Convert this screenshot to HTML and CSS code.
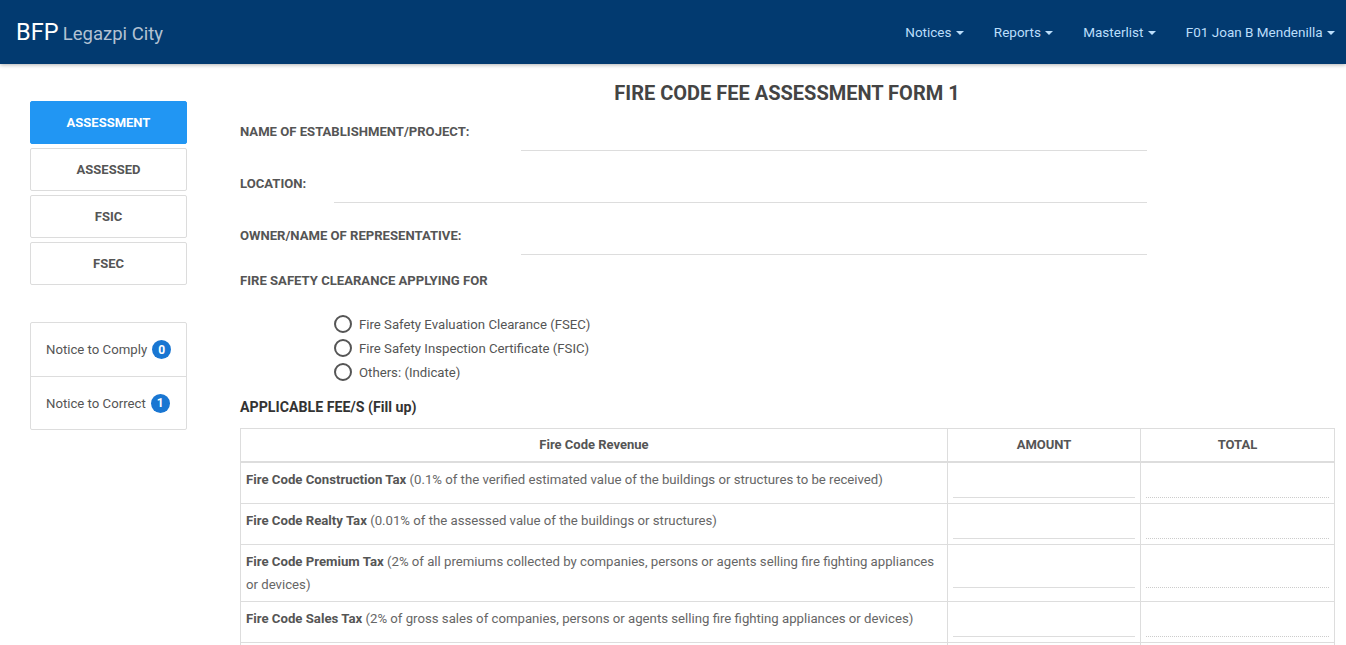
FILE: index.html
```html
<!DOCTYPE html>
<html>
<head>
<meta charset="utf-8">
<title>BFP Legazpi City</title>
<link rel="stylesheet" href="styles.css">
</head>
<body>
<nav class="navbar">
  <div class="brand"><span class="brand-main">BFP</span> <span class="brand-sub">Legazpi City</span></div>
  <ul class="nav">
    <li>Notices <span class="caret"></span></li>
    <li>Reports <span class="caret"></span></li>
    <li>Masterlist <span class="caret"></span></li>
    <li>F01 Joan B Mendenilla <span class="caret"></span></li>
  </ul>
</nav>
<div class="page">
  <aside class="sidebar">
    <div class="menu">
      <div class="menu-btn active">ASSESSMENT</div>
      <div class="menu-btn">ASSESSED</div>
      <div class="menu-btn">FSIC</div>
      <div class="menu-btn">FSEC</div>
    </div>
    <ul class="notices">
      <li>Notice to Comply <span class="badge">0</span></li>
      <li>Notice to Correct <span class="badge">1</span></li>
    </ul>
  </aside>
  <main class="content">
    <h1 class="title">FIRE CODE FEE ASSESSMENT FORM 1</h1>
    <div class="form-row">
      <label class="field-label">NAME OF ESTABLISHMENT/PROJECT:</label>
      <div class="line-input wide"></div>
    </div>
    <div class="form-row">
      <label class="field-label">LOCATION:</label>
      <div class="line-input loc"></div>
    </div>
    <div class="form-row">
      <label class="field-label">OWNER/NAME OF REPRESENTATIVE:</label>
      <div class="line-input wide"></div>
    </div>
    <div class="field-label section">FIRE SAFETY CLEARANCE APPLYING FOR</div>
    <div class="radios">
      <div class="radio"><span class="circle"></span>Fire Safety Evaluation Clearance (FSEC)</div>
      <div class="radio"><span class="circle"></span>Fire Safety Inspection Certificate (FSIC)</div>
      <div class="radio"><span class="circle"></span>Others: (Indicate)</div>
    </div>
    <h2 class="fees">APPLICABLE FEE/S (Fill up)</h2>
    <table class="fee-table">
      <colgroup><col class="c1"><col class="c2"><col class="c3"></colgroup>
      <thead>
        <tr><th>Fire Code Revenue</th><th>AMOUNT</th><th>TOTAL</th></tr>
      </thead>
      <tbody>
        <tr>
          <td class="desc"><b>Fire Code Construction Tax</b> (0.1% of the verified estimated value of the buildings or structures to be received)</td>
          <td class="inp"><div class="amount"></div></td>
          <td class="inp"><div class="total"></div></td>
        </tr>
        <tr>
          <td class="desc"><b>Fire Code Realty Tax</b> (0.01% of the assessed value of the buildings or structures)</td>
          <td class="inp"><div class="amount"></div></td>
          <td class="inp"><div class="total"></div></td>
        </tr>
        <tr>
          <td class="desc"><b>Fire Code Premium Tax</b> (2% of all premiums collected by companies, persons or agents selling fire fighting appliances or devices)</td>
          <td class="inp"><div class="amount"></div></td>
          <td class="inp"><div class="total"></div></td>
        </tr>
        <tr>
          <td class="desc"><b>Fire Code Sales Tax</b> (2% of gross sales of companies, persons or agents selling fire fighting appliances or devices)</td>
          <td class="inp"><div class="amount"></div></td>
          <td class="inp"><div class="total"></div></td>
        </tr>
        <tr>
          <td class="desc"><b>Fire Code Proceeds Tax</b> (10% of the proceeds)</td>
          <td class="inp"><div class="amount"></div></td>
          <td class="inp"><div class="total"></div></td>
        </tr>
      </tbody>
    </table>
  </main>
</div>
</body>
</html>
```
FILE: styles.css
```css
* { box-sizing: border-box; }
html, body { margin: 0; padding: 0; }
body {
  font-family: Roboto, "Noto Sans", "Liberation Sans", sans-serif;
  font-size: 13.2px;
  color: #555;
  background: #fff;
  overflow: hidden;
}
.navbar {
  height: 64px;
  background: #023a70;
  display: flex;
  align-items: center;
  justify-content: space-between;
  padding: 0 11px 0 16px;
  box-shadow: 0 1px 4px rgba(0,0,0,0.3);
  position: relative;
  z-index: 2;
}
.brand { color: #fff; white-space: nowrap; }
.brand-main { font-size: 23.5px; }
.brand-sub { font-size: 18.5px; color: #b3c2d3; margin-left: 1px; }
.nav { list-style: none; margin: 0; padding: 0; display: flex; }
.nav li {
  color: #bbdefb;
  font-size: 13.5px;
  padding: 0 15px;
  white-space: nowrap;
}
.nav li:last-child { padding-right: 0; }
.caret {
  display: inline-block;
  width: 0; height: 0;
  border-left: 4px solid transparent;
  border-right: 4px solid transparent;
  border-top: 4px solid #bbdefb;
  vertical-align: middle;
  margin-left: 1px;
}
.page { display: flex; padding-left: 30px; }
.sidebar { width: 157px; padding-top: 37px; flex: none; }
.menu { display: flex; flex-direction: column; gap: 4px; }
.menu-btn {
  height: 43px;
  border: 1px solid #dcdcdc;
  border-radius: 2px;
  display: flex;
  align-items: center;
  justify-content: center;
  font-weight: bold;
  font-size: 13px;
  color: #555;
}
.menu-btn.active { background: #2196f3; border-color: #2196f3; color: #fff; }
.notices {
  list-style: none; margin: 37px 0 0; padding: 0;
  border: 1px solid #ddd; border-radius: 2px;
}
.notices li {
  height: 53px;
  display: flex; align-items: center;
  padding-left: 15px;
  color: #555;
}
.notices li + li { border-top: 1px solid #ddd; }
.badge {
  width: 19px; height: 19px; border-radius: 50%;
  background: #1976d2; color: #fff;
  font-size: 12px; font-weight: bold;
  display: inline-flex; align-items: center; justify-content: center;
  margin-left: 5px;
}
.content { margin-left: 53px; width: 1094px; flex: none; }
.title {
  margin: 17px 0 0;
  font-size: 20px; line-height: 24px;
  text-align: center; color: #444; font-weight: bold;
}
.form-row { height: 52px; position: relative; display: flex; align-items: flex-start; }
.form-row:first-of-type { margin-top: -1px; }
.field-label {
  font-weight: bold; font-size: 13.1px; color: #555;
  line-height: 20px; padding-top: 18px;
}
.line-input { height: 34px; margin-top: 13px; border-bottom: 1px solid #ddd; position: absolute; }
.line-input.wide { left: 281px; width: 626px; }
.line-input.loc { left: 94px; width: 813px; }
.field-label.section { padding-top: 11px; }
.radios { margin-top: 21px; padding-left: 94px; }
.radio { height: 24px; display: flex; align-items: center; color: #555; }
.circle {
  width: 18px; height: 18px; border: 2px solid #555; border-radius: 50%;
  margin-right: 7px; flex: none;
}
.fees { margin: 13px 0 0; font-size: 14.2px; line-height: 20px; color: #333; font-weight: bold; }
.fee-table {
  margin-top: 11px; width: 1094px; border-collapse: collapse;
  border: 1px solid #ddd; table-layout: fixed;
}
.c1 { width: 707px; }
.c2 { width: 193px; }
.c3 { width: 194px; }
.fee-table th {
  border: 1px solid #ddd; border-bottom: 2px solid #ddd;
  font-size: 13px; color: #555; font-weight: bold;
  padding: 5px 6px 6px; line-height: 21px;
}
.fee-table td {
  border: 1px solid #ddd; padding: 5px 5px; line-height: 23px; color: #666;
}
.fee-table td.desc { vertical-align: top; padding-left: 5px; }
.fee-table td.desc b { color: #555; }
.fee-table td.inp { vertical-align: middle; }
.amount { height: 30px; border-bottom: 1px solid #ddd; }
.total { height: 30px; border-bottom: 1px dotted #ccc; }
```
